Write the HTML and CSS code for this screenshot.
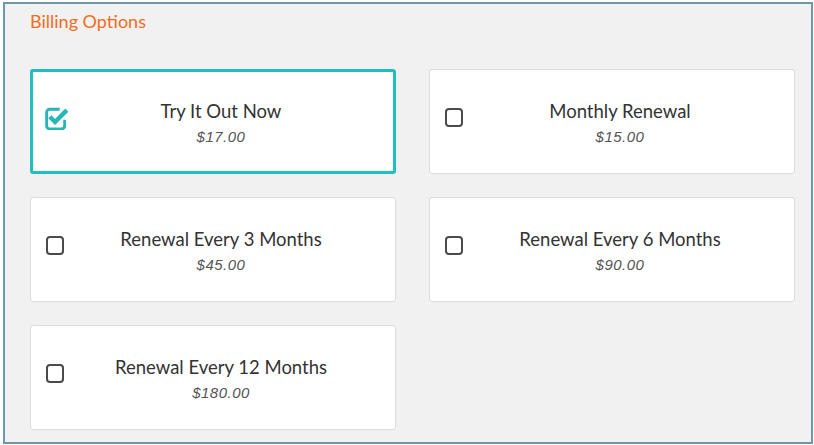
FILE: index.html
```html
<!DOCTYPE html>
<html lang="en">
<head>
    <meta charset="UTF-8">
    <meta name="viewport" content="width=device-width, initial-scale=1.0">
    <title>Billing Options</title>
    <link rel="stylesheet" href="styles.css">
</head>
<body>
    <div class="billing">
        <h2 class="billing-title">Billing Options</h2>

        <div class="plans">
            <label class="plan selected">
                <span class="check">
                    <svg width="24" height="24" viewBox="0 0 22 22">
                        <path d="M13.5 3 H4.2 A2.7 2.7 0 0 0 1.5 5.7 V18.3 A2.7 2.7 0 0 0 4.2 21 H15.3 A2.7 2.7 0 0 0 18 18.3 V12.5" fill="none" stroke="#26b5b9" stroke-width="2.6"/>
                        <path d="M4.4 9.8 L9.2 14.6 L20 3.8" fill="none" stroke="#26b5b9" stroke-width="4"/>
                    </svg>
                </span>
                <span class="plan-text">
                    <span class="plan-name">Try It Out Now</span>
                    <span class="plan-price">$17.00</span>
                </span>
            </label>

            <label class="plan">
                <span class="check"><span class="box"></span></span>
                <span class="plan-text">
                    <span class="plan-name">Monthly Renewal</span>
                    <span class="plan-price">$15.00</span>
                </span>
            </label>

            <label class="plan">
                <span class="check"><span class="box"></span></span>
                <span class="plan-text">
                    <span class="plan-name">Renewal Every 3 Months</span>
                    <span class="plan-price">$45.00</span>
                </span>
            </label>

            <label class="plan">
                <span class="check"><span class="box"></span></span>
                <span class="plan-text">
                    <span class="plan-name">Renewal Every 6 Months</span>
                    <span class="plan-price">$90.00</span>
                </span>
            </label>

            <label class="plan">
                <span class="check"><span class="box"></span></span>
                <span class="plan-text">
                    <span class="plan-name">Renewal Every 12 Months</span>
                    <span class="plan-price">$180.00</span>
                </span>
            </label>
        </div>
    </div>
</body>
</html>
```

FILE: styles.css
```css
* {
    box-sizing: border-box;
}
body {
    margin: 0;
    background: #fff;
}
.billing {
    width: 810px;
    height: 442px;
    margin: 2px 0 0 3px;
    padding: 7px 0 0 25px;
    background: #f1f1f1;
    border: 2px solid #7096aa;
}
.billing-title {
    margin: 0;
    font-family: Lato, "Open Sans", sans-serif;
    font-size: 18px;
    font-weight: 400;
    line-height: 20px;
    color: #f36c22;
}
.plans {
    display: grid;
    grid-template-columns: 366px 366px;
    grid-auto-rows: 105px;
    column-gap: 33px;
    row-gap: 23px;
    margin-top: 38px;
}
.plan {
    display: flex;
    align-items: center;
    padding: 4px 20px 0 14px;
    background: #fff;
    border: 1px solid #dcdcdc;
    border-radius: 3px;
    cursor: pointer;
}
.plan.selected {
    padding: 4px 18px 0 12px;
    border: 3px solid #22bdbd;
}
.check {
    display: flex;
    align-items: center;
    justify-content: flex-start;
    width: 22px;
    height: 24px;
    margin-bottom: 12px;
}
.check svg {
    display: block;
    flex: none;
}
.box {
    width: 18px;
    height: 19px;
    margin-left: 1px;
    border: 2px solid #4a4a4a;
    border-radius: 4px;
}
.plan-text {
    flex: 1;
    display: flex;
    flex-direction: column;
    text-align: center;
}
.plan-name {
    font-family: Lato, "Open Sans", sans-serif;
    font-size: 18.5px;
    line-height: 22px;
    color: #333;
}
.plan-price {
    margin-top: 5px;
    font-family: "Liberation Sans", Arial, sans-serif;
    font-style: italic;
    font-size: 15px;
    line-height: 20px;
    letter-spacing: 0.5px;
    color: #555;
}
```
